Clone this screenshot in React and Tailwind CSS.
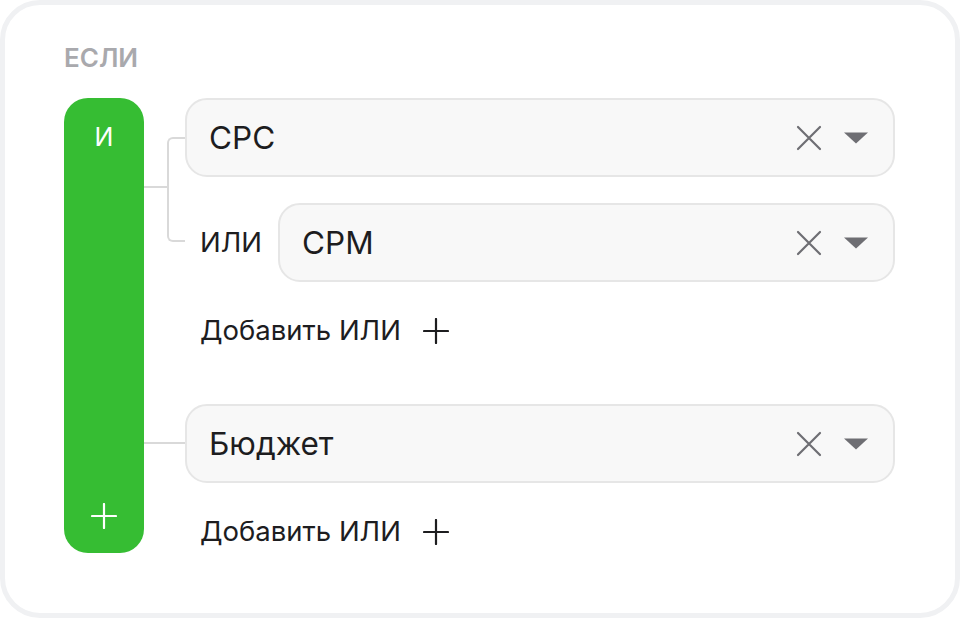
import React from 'react';

const XIcon = () => (
  <svg width="26" height="26" viewBox="0 0 26 26" fill="none">
    <path d="M2 2L24 24M24 2L2 24" stroke="#6e6e73" strokeWidth="2.2" strokeLinecap="round" />
  </svg>
);

const Caret = () => (
  <svg width="24" height="12" viewBox="0 0 24 12">
    <path d="M0 0.5H24L12 11.5Z" fill="#6e6e73" />
  </svg>
);

const Plus = ({ color = '#1d1d1f', size = 26 }) => (
  <svg width={size} height={size} viewBox="0 0 26 26" fill="none">
    <path d="M13 1V25M1 13H25" stroke={color} strokeWidth="2.2" strokeLinecap="round" />
  </svg>
);

const Field = ({ label, className = '' }) => (
  <div className={`flex items-center h-[79px] rounded-[22px] border-2 border-[#e6e6e6] bg-[#f8f8f8] pl-[22px] pr-[25px] ${className}`}>
    <span className="flex-1 text-[31.5px] text-[#1d1d1f]">{label}</span>
    <div className="flex items-center gap-[22px]">
      <XIcon />
      <Caret />
    </div>
  </div>
);

const AddOr = () => (
  <div className="flex items-center h-[36px] mt-[31px] pl-[15px] gap-[22px] text-[27.5px] text-[#1d1d1f]">
    <span>Добавить ИЛИ</span>
    <Plus />
  </div>
);

export default function App() {
  return (
    <div className="w-[960px] h-[618px] bg-white" style={{ fontFamily: 'Inter, "Noto Sans", sans-serif' }}>
      <div className="w-full h-full rounded-[40px] border-[5px] border-[#f0f1f3] pl-[59px] pr-[60px] pt-[34px]">
        <div className="h-[38px] text-[26px] font-semibold text-[#a9a9ad] leading-[38px]">ЕСЛИ</div>
        <div className="flex mt-[21px]">
          <div className="w-[80px] h-[455px] shrink-0 rounded-[24px] bg-[#36bd33] flex flex-col items-center justify-between pt-[26px] pb-[23px]">
            <div className="h-[28px] flex items-center text-[25px] text-white">И</div>
            <div className="h-[28px] flex items-center">
              <Plus color="#ffffff" size={26} />
            </div>
          </div>
          <div className="flex-1 flex flex-col">
            {/* group 1 */}
            <div className="flex">
              <div className="relative w-[41px] shrink-0">
                <div className="absolute left-0 top-[88px] w-[24px] h-[2px] bg-[#d9d9d9]" />
                <div className="absolute left-[23px] top-[39px] w-[18px] h-[105px] border-2 border-r-0 border-[#d9d9d9] rounded-l-[6px]" />
              </div>
              <div className="flex-1 flex flex-col">
                <Field label="CPC" />
                <div className="flex items-center mt-[26px]">
                  <div className="w-[93px] shrink-0 pl-[15px] text-[27.5px] text-[#1d1d1f]">ИЛИ</div>
                  <Field label="CPM" className="flex-1" />
                </div>
                <AddOr />
              </div>
            </div>
            {/* group 2 */}
            <div className="flex mt-[55px]">
              <div className="relative w-[41px] shrink-0">
                <div className="absolute left-0 top-[38px] w-[41px] h-[2px] bg-[#d9d9d9]" />
              </div>
              <div className="flex-1 flex flex-col">
                <Field label="Бюджет" />
                <AddOr />
              </div>
            </div>
          </div>
        </div>
      </div>
    </div>
  );
}
